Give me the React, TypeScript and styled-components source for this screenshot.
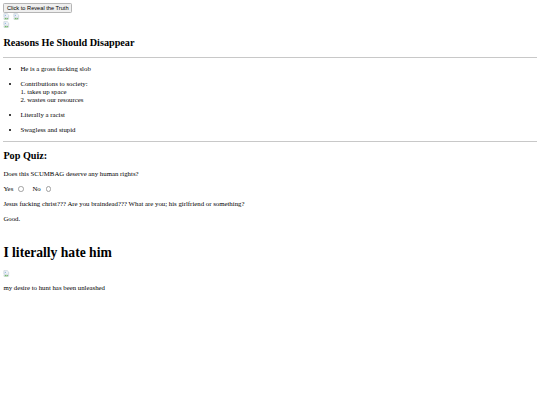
import React, { useState } from 'react';
import styled, { createGlobalStyle } from 'styled-components';

// the reference is a plain unstyled page seen at about 42% zoom
const S = 0.425;
const px = (n: number) => `${(n * S).toFixed(2)}px`;

const GlobalStyle = createGlobalStyle`
  html, body {
    background: #ffffff;
  }
  body {
    margin: ${px(8)};
    font-family: "Liberation Serif", "Times New Roman", serif;
    font-size: ${px(16)};
    line-height: 1.18;
    color: #000000;
  }
`;

const RevealButton = styled.button`
  display: inline-block;
  font-family: "Liberation Sans", Arial, sans-serif;
  font-size: ${px(13.33)};
  line-height: 1.15;
  padding: ${px(1)} ${px(6)};
  margin: 0;
  color: #000000;
  background: #efefef;
  border: 1px solid #b5b5b5;
  border-radius: ${px(3)};
  cursor: pointer;
`;

const ImageRow = styled.div`
  display: flex;
  gap: ${px(6)};
  height: ${px(19)};
  align-items: center;
`;

const BrokenImg = styled.span`
  display: inline-flex;
  width: ${px(16)};
  height: ${px(16)};
`;

const SectionTitle = styled.h2`
  font-size: ${px(24)};
  font-weight: bold;
  line-height: 1.15;
  margin: ${px(19.9)} 0;
`;

const Rule = styled.hr`
  margin: ${px(6)} 0;
  border: none;
  border-top: 1px solid #c8c8c8;
  height: 0;
`;

const ReasonList = styled.ul`
  margin: ${px(16)} 0;
  padding-left: ${px(40)};
  list-style: disc;
`;

const Reason = styled.li`
  & > p {
    margin: ${px(16)} 0;
  }
`;

const Para = styled.p`
  margin: ${px(16)} 0;
`;

const Choice = styled.label`
  display: inline-flex;
  align-items: center;
  margin-right: ${px(20)};
`;

const Radio = styled.input.attrs({ type: 'radio' })`
  appearance: none;
  width: ${px(13)};
  height: ${px(13)};
  margin: 0 0 0 ${px(12)};
  border: 1px solid #a0a0a0;
  border-radius: 50%;
  background: #ffffff;
  &:checked {
    background: radial-gradient(circle, #1a73e8 40%, #ffffff 45%);
  }
`;

const HateSection = styled.section`
  padding-top: ${px(15)};
`;

const BigTitle = styled.h1`
  font-size: ${px(32)};
  font-weight: bold;
  line-height: 1.15;
  margin: ${px(21.4)} 0;
`;

const ImgLine = styled.div`
  height: ${px(19)};
  display: flex;
  align-items: center;
`;

const BrokenIcon = () => (
  <BrokenImg>
    <svg viewBox="0 0 16 16" width="100%" height="100%">
      <path d="M2 1.5h8l3.5 3.5v5.5l-2 -1.5-2 2-2-2-2 2-2-2-1.5 1z" fill="#eef3f8" stroke="#a8b4c0" strokeWidth="1" />
      <path d="M2 12.5l2-1.5 2 2 2-2 2 2 2-2 1.5 1v2.5h-11.5z" fill="#e6eef5" stroke="#a8b4c0" strokeWidth="1" />
      <path d="M3 15l3-3 2.5 1.5 3-2v3.5h-8.5z" fill="#5fb246" />
      <circle cx="5.5" cy="5.5" r="1.3" fill="#7aa8d8" />
    </svg>
  </BrokenImg>
);

const App: React.FC = () => {
  const [answer, setAnswer] = useState<string>('');

  return (
    <>
      <GlobalStyle />
      <RevealButton>Click to Reveal the Truth</RevealButton>
      <ImageRow>
        <BrokenIcon />
        <BrokenIcon />
      </ImageRow>
      <ImageRow>
        <BrokenIcon />
      </ImageRow>

      <SectionTitle>Reasons He Should Disappear</SectionTitle>
      <Rule />
      <ReasonList>
        <Reason><p>He is a gross fucking slob</p></Reason>
        <Reason>
          <p>
            Contributions to society:<br />
            1. takes up space<br />
            2. wastes our resources
          </p>
        </Reason>
        <Reason><p>Literally a racist</p></Reason>
        <Reason><p>Swagless and stupid</p></Reason>
      </ReasonList>
      <Rule />

      <SectionTitle>Pop Quiz:</SectionTitle>
      <Para>Does this SCUMBAG deserve any human rights?</Para>
      <Para>
        <Choice>
          Yes
          <Radio name="quiz" checked={answer === 'yes'} onChange={() => setAnswer('yes')} />
        </Choice>
        <Choice>
          No
          <Radio name="quiz" checked={answer === 'no'} onChange={() => setAnswer('no')} />
        </Choice>
      </Para>
      <Para>Jesus fucking christ??? Are you braindead??? What are you; his girlfriend or something?</Para>
      <Para>Good.</Para>

      <HateSection>
        <BigTitle>I literally hate him</BigTitle>
        <ImgLine>
          <BrokenIcon />
        </ImgLine>
        <Para>my desire to hunt has been unleashed</Para>
      </HateSection>
    </>
  );
};

export default App;
